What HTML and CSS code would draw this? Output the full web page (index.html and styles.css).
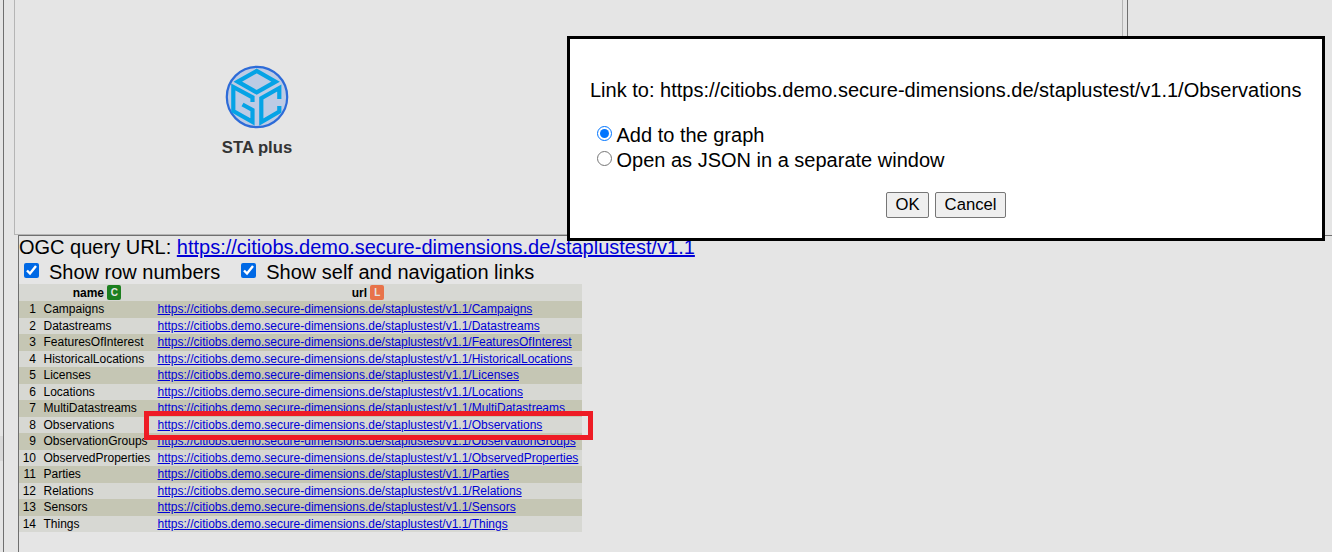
FILE: index.html
```html
<!DOCTYPE html>
<html lang="en">
<head>
<meta charset="utf-8">
<title>STA plus</title>
<link rel="stylesheet" href="styles.css">
</head>
<body>
<div class="app">
  <div class="gutter"><div class="thumb"></div></div>
  <main class="main">
    <section class="upper">
      <div class="canvas">
        <figure class="node">
          <svg class="logo" width="64" height="64" viewBox="0 0 64 64">
            <circle cx="32" cy="32" r="30.200" fill="#bdcbe4" stroke="#2d6bd8" stroke-width="2.200"/>
            <g fill="none" stroke="#05a3e6" stroke-width="4.200">
              <path d="M12.800 16.700 31.700 6 50.600 16.700 31.700 27.400Z"/>
              <path d="M27.500 37V32.300L8.300 22V46L27.500 56.800V45L17.500 39.500"/>
              <path d="M54.300 34V23L36.300 33.300V57L54.300 46.500V41"/>
            </g>
          </svg>
          <figcaption class="caption">STA plus</figcaption>
        </figure>
      </div>
      <div class="divider"></div>
    </section>
    <section class="query">
      <div class="line">OGC query URL: <a href="#">https://citiobs.demo.secure-dimensions.de/staplustest/v1.1</a></div>
      <div class="line options">
        <label class="option"><input class="check" type="checkbox" checked>Show row numbers</label>
        <label class="option"><input class="check" type="checkbox" checked>Show self and navigation links</label>
      </div>
      <table class="table">
        <thead><tr><th class="num"></th><th class="name">name <span class="tag green">C</span></th><th class="url">url <span class="tag orange">L</span></th></tr></thead>
        <tbody>
          <tr><td>1</td><td>Campaigns</td><td><a href="#">https://citiobs.demo.secure-dimensions.de/staplustest/v1.1/Campaigns</a></td></tr>
          <tr><td>2</td><td>Datastreams</td><td><a href="#">https://citiobs.demo.secure-dimensions.de/staplustest/v1.1/Datastreams</a></td></tr>
          <tr><td>3</td><td>FeaturesOfInterest</td><td><a href="#">https://citiobs.demo.secure-dimensions.de/staplustest/v1.1/FeaturesOfInterest</a></td></tr>
          <tr><td>4</td><td>HistoricalLocations</td><td><a href="#">https://citiobs.demo.secure-dimensions.de/staplustest/v1.1/HistoricalLocations</a></td></tr>
          <tr><td>5</td><td>Licenses</td><td><a href="#">https://citiobs.demo.secure-dimensions.de/staplustest/v1.1/Licenses</a></td></tr>
          <tr><td>6</td><td>Locations</td><td><a href="#">https://citiobs.demo.secure-dimensions.de/staplustest/v1.1/Locations</a></td></tr>
          <tr><td>7</td><td>MultiDatastreams</td><td><a href="#">https://citiobs.demo.secure-dimensions.de/staplustest/v1.1/MultiDatastreams</a></td></tr>
          <tr><td>8</td><td>Observations</td><td class="marked"><a href="#">https://citiobs.demo.secure-dimensions.de/staplustest/v1.1/Observations</a></td></tr>
          <tr><td>9</td><td>ObservationGroups</td><td><a href="#">https://citiobs.demo.secure-dimensions.de/staplustest/v1.1/ObservationGroups</a></td></tr>
          <tr><td>10</td><td>ObservedProperties</td><td><a href="#">https://citiobs.demo.secure-dimensions.de/staplustest/v1.1/ObservedProperties</a></td></tr>
          <tr><td>11</td><td>Parties</td><td><a href="#">https://citiobs.demo.secure-dimensions.de/staplustest/v1.1/Parties</a></td></tr>
          <tr><td>12</td><td>Relations</td><td><a href="#">https://citiobs.demo.secure-dimensions.de/staplustest/v1.1/Relations</a></td></tr>
          <tr><td>13</td><td>Sensors</td><td><a href="#">https://citiobs.demo.secure-dimensions.de/staplustest/v1.1/Sensors</a></td></tr>
          <tr><td>14</td><td>Things</td><td><a href="#">https://citiobs.demo.secure-dimensions.de/staplustest/v1.1/Things</a></td></tr>
        </tbody>
      </table>
    </section>
  </main>
</div>
<div class="dialog" role="dialog">
  <p class="message">Link to: https://citiobs.demo.secure-dimensions.de/staplustest/v1.1/Observations</p>
  <div class="choices">
    <label class="choice"><input class="radio" type="radio" name="action" checked>Add to the graph</label>
    <label class="choice"><input class="radio" type="radio" name="action">Open as JSON in a separate window</label>
  </div>
  <div class="buttons"><button class="button">OK</button><button class="button">Cancel</button></div>
</div>
</body>
</html>
```
FILE: styles.css
```css
*, *::after { box-sizing: border-box; }
body {
  margin: 0;
  height: 552px;
  overflow: hidden;
  background: #e5e5e5;
  color: #000;
  font: 20px/25px "Liberation Sans", Arial, sans-serif;
}
a { color: #0000d6; text-decoration: underline; }
.app { display: flex; height: 552px; }
.gutter { width: 4px; border-right: 1px solid #6f6f6f; padding-top: 436px; }
.thumb { height: 25px; background: #d9d9d9; }
.main { flex: 1; display: flex; flex-direction: column; }
.upper { display: flex; height: 235px; padding-left: 10px; }
.canvas {
  width: 1109px;
  border: 1px solid #b5b5b5;
  border-top: 0;
  padding: 65px 0 0 206px;
}
.node { margin: 0; width: 72px; display: flex; flex-direction: column; align-items: center; }
.logo { display: block; }
.caption {
  margin-top: 9px;
  font: bold 16.667px/20px "Liberation Sans", Arial, sans-serif;
  color: #343434;
  white-space: nowrap;
}
.divider { width: 1px; margin-left: 4px; background: #707070; }
.query {
  flex: 1;
  margin-left: 14px;
  border-left: 1px solid #6f6f6f;
  border-top: 1px solid #6f6f6f;
}
.line { height: 24px; line-height: 23px; white-space: nowrap; }
.options { display: flex; gap: 21px; padding-left: 5px; line-height: 25px; }
.option { display: flex; }
.check { width: 15px; height: 15px; margin: 3px 10px 0 0; accent-color: #0069e5; }
.table {
  border-collapse: collapse;
  table-layout: fixed;
  width: 563px;
  font-size: 12px;
  line-height: 16px;
  background: #d7d8d3;
}
.table th { height: 17px; padding: 0; }
.table td { height: 16.500px; padding: 0 3px 0 3.500px; white-space: nowrap; }
.table tbody tr:nth-child(odd) { background: #c5c6b4; }
.table td:first-child { text-align: right; padding-right: 4px; }
.num { width: 21px; }
.name { width: 114px; }
.tag {
  display: inline-block;
  width: 14px;
  height: 15px;
  border-radius: 2px;
  font-size: 10px;
  line-height: 15px;
  color: #e5e5e5;
  vertical-align: top;
}
.green { background: #1c7f1f; }
.orange { background: #e8734a; }
.marked { position: relative; }
.marked::after {
  content: "";
  position: absolute;
  left: -10px;
  top: -6px;
  width: 449px;
  height: 29px;
  border: 5px solid #ee1c25;
}
.dialog {
  position: absolute;
  left: 567px;
  top: 36px;
  width: 758px;
  height: 205px;
  border: 3px solid #000;
  background: #fff;
  padding: 39px 20px 0;
}
.message { margin: 0; white-space: nowrap; }
.choices { display: flex; flex-direction: column; margin-top: 20px; padding-left: 7px; }
.choice { display: flex; height: 25px; }
.radio { width: 15px; height: 15px; margin: 3px 4.500px 0 0; accent-color: #0075ff; }
.buttons { display: flex; justify-content: center; gap: 6px; margin-top: 19px; }
.button {
  height: 26px;
  border: 1px solid #767676;
  border-radius: 2px;
  background: #efefef;
  padding: 0 8.500px;
  font: 16.667px/22px "Liberation Sans", Arial, sans-serif;
  color: #000;
}
```
